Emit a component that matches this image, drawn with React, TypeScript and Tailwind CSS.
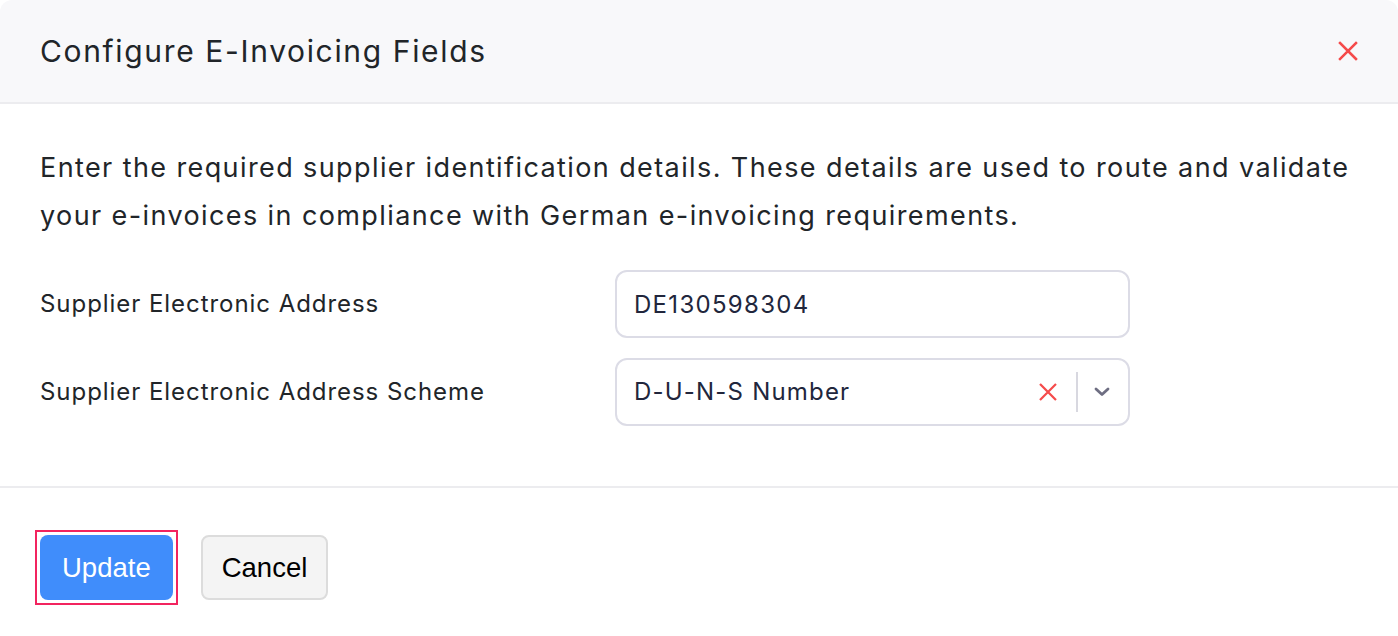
import { useState } from 'react'

function CrossIcon({ size, className }: { size: number; className?: string }) {
  return (
    <svg width={size} height={size} viewBox="0 0 20 20" className={className} fill="none">
      <path d="M2 2L18 18M18 2L2 18" stroke="currentColor" strokeWidth="2.5" strokeLinecap="square" />
    </svg>
  )
}

function ChevronDown() {
  return (
    <svg width="16" height="10" viewBox="0 0 16 10" fill="none" className="text-[#6e6e82]">
      <path d="M2 2L8 7.5L14 2" stroke="currentColor" strokeWidth="2.8" strokeLinecap="round" strokeLinejoin="round" />
    </svg>
  )
}

export default function App() {
  const [address, setAddress] = useState('DE130598304')
  const [scheme, setScheme] = useState('D-U-N-S Number')

  return (
    <div className="min-h-screen bg-white font-['Inter',sans-serif] text-[#212529]">
      <div className="rounded-t-[12px] bg-white overflow-hidden">
        <header className="flex h-[104px] items-center justify-between border-b-2 border-[#ececef] bg-[#f8f8fa] pl-10 pr-10">
          <h1 className="text-[30px] font-normal tracking-[1.65px] text-[#212529]">Configure E-Invoicing Fields</h1>
          <button className="text-[#f54b4b]">
            <CrossIcon size={20} />
          </button>
        </header>

        <section className="border-b-2 border-[#ececef] px-10 pt-[40px] pb-[60px]">
          <p className="whitespace-nowrap text-[27px] leading-[48px] tracking-[1.4px] text-[#212529]">
            Enter the required supplier identification details. These details are used to route and validate
            <br />
            your e-invoices in compliance with German e-invoicing requirements.
          </p>

          <div className="mt-[30px] grid grid-cols-[575px_515px] gap-y-5">
            <label className="flex items-center text-[24px] tracking-[0.95px] text-[#212529]">
              Supplier Electronic Address
            </label>
            <input
              value={address}
              onChange={(e) => setAddress(e.target.value)}
              className="h-[68px] rounded-[12px] border-2 border-[#dcdce6] px-[17px] text-[24px] tracking-[1.3px] text-[#21263c] outline-none"
            />

            <label className="flex items-center text-[24px] tracking-[0.95px] text-[#212529]">
              Supplier Electronic Address Scheme
            </label>
            <div className="flex h-[68px] items-center rounded-[12px] border-2 border-[#dcdce6] pl-[17px] pr-[18px]">
              <span className="flex-1 text-[24px] tracking-[1.2px] text-[#21263c]">{scheme}</span>
              <button onClick={() => setScheme('')} className="mr-[19px] text-[#f54b4b]">
                <CrossIcon size={18} />
              </button>
              <span className="h-[40px] w-[2px] bg-[#d8d8e0]" />
              <span className="ml-[16px] flex items-center">
                <ChevronDown />
              </span>
            </div>
          </div>
        </section>

        <footer className="flex items-center gap-[23px] px-[35px] pt-[42px] pb-[30px] font-['Liberation_Sans',Arial,sans-serif]">
          <span className="inline-flex border-2 border-[#f2245f] p-[3px]">
            <button className="h-[65px] rounded-[8px] bg-[#408dfb] px-[22px] text-[27.5px] text-white">Update</button>
          </span>
          <button className="h-[65px] rounded-[8px] border-2 border-[#dcdcdc] bg-[#f4f4f4] px-[19px] text-[27.5px] text-black">
            Cancel
          </button>
        </footer>
      </div>
    </div>
  )
}
